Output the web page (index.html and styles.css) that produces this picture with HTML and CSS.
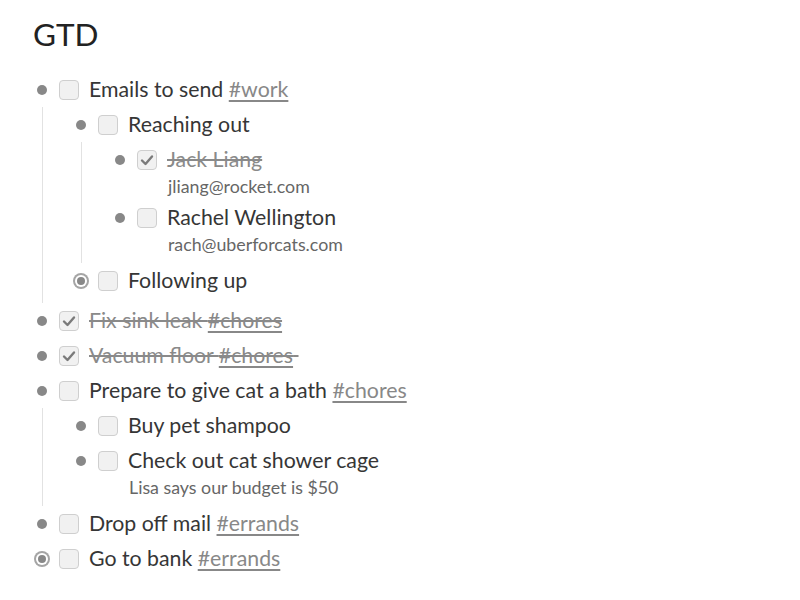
FILE: index.html
```html
<!DOCTYPE html>
<html>
<head>
<meta charset="utf-8">
<link rel="stylesheet" href="styles.css">
</head>
<body>
<div class="page">
  <h1 class="title">GTD</h1>
  <ul class="list">
    <li class="item">
      <div class="row"><span class="bullet"></span><span class="cb"></span><span class="text">Emails to send <span class="tag">#work</span></span></div>
      <ul class="children">
        <li class="item">
          <div class="row"><span class="bullet"></span><span class="cb"></span><span class="text">Reaching out</span></div>
          <ul class="children">
            <li class="item done">
              <div class="row"><span class="bullet"></span><span class="cb checked"><svg viewBox="0 0 20 20" width="20" height="20"><path d="M5 10.5 L8.5 14 L15 6.5" fill="none" stroke="#7a7a7a" stroke-width="2.4" stroke-linecap="round" stroke-linejoin="round"/></svg></span><span class="text">Jack Liang</span></div>
              <div class="note">jliang@rocket.com</div>
            </li>
            <li class="item">
              <div class="row"><span class="bullet"></span><span class="cb"></span><span class="text">Rachel Wellington</span></div>
              <div class="note">rach@uberforcats.com</div>
            </li>
          </ul>
        </li>
        <li class="item">
          <div class="row"><span class="bullet collapsed"></span><span class="cb"></span><span class="text">Following up</span></div>
        </li>
      </ul>
    </li>
    <li class="item done">
      <div class="row"><span class="bullet"></span><span class="cb checked"><svg viewBox="0 0 20 20" width="20" height="20"><path d="M5 10.5 L8.5 14 L15 6.5" fill="none" stroke="#7a7a7a" stroke-width="2.4" stroke-linecap="round" stroke-linejoin="round"/></svg></span><span class="text">Fix sink leak <span class="tag">#chores</span></span></div>
    </li>
    <li class="item done">
      <div class="row"><span class="bullet"></span><span class="cb checked"><svg viewBox="0 0 20 20" width="20" height="20"><path d="M5 10.5 L8.5 14 L15 6.5" fill="none" stroke="#7a7a7a" stroke-width="2.4" stroke-linecap="round" stroke-linejoin="round"/></svg></span><span class="text">Vacuum floor <span class="tag">#chores</span>&nbsp;</span></div>
    </li>
    <li class="item">
      <div class="row"><span class="bullet"></span><span class="cb"></span><span class="text">Prepare to give cat a bath <span class="tag">#chores</span></span></div>
      <ul class="children">
        <li class="item">
          <div class="row"><span class="bullet"></span><span class="cb"></span><span class="text">Buy pet shampoo</span></div>
        </li>
        <li class="item">
          <div class="row"><span class="bullet"></span><span class="cb"></span><span class="text">Check out cat shower cage</span></div>
          <div class="note">Lisa says our budget is $50</div>
        </li>
      </ul>
    </li>
    <li class="item">
      <div class="row"><span class="bullet"></span><span class="cb"></span><span class="text">Drop off mail <span class="tag">#errands</span></span></div>
    </li>
    <li class="item">
      <div class="row"><span class="bullet collapsed"></span><span class="cb"></span><span class="text">Go to bank <span class="tag">#errands</span></span></div>
    </li>
  </ul>
</div>
</body>
</html>
```
FILE: styles.css
```css
* { box-sizing: border-box; }
html, body { margin: 0; padding: 0; background: #fff; }
body {
  font-family: Lato, "Open Sans", sans-serif;
  color: #333;
}
.page {
  padding: 14px 0 0 33px;
}
.title {
  margin: 0 0 18px 0;
  font-size: 31.5px;
  font-weight: 400;
  line-height: 40px;
  color: #222;
}
.list, .children {
  list-style: none;
  margin: 0;
  padding: 0;
}
.children {
  margin-left: 9px;
  padding-left: 29px;
  padding-bottom: 5px;
  border-left: 1px solid #e2e2e2;
}
.row {
  display: flex;
  align-items: center;
  height: 35px;
}
.bullet {
  width: 18px;
  height: 18px;
  flex: none;
  display: flex;
  align-items: center;
  justify-content: center;
}
.bullet::before {
  content: "";
  width: 10px;
  height: 10px;
  border-radius: 50%;
  background: #888;
}
.bullet.collapsed::before {
  width: 8px;
  height: 8px;
  box-shadow: 0 0 0 2px #fff, 0 0 0 4px #a5a5a5;
}
.cb {
  flex: none;
  width: 20px;
  height: 20px;
  margin-left: 8px;
  border: 1px solid #cfcfcf;
  border-radius: 4px;
  background: #f1f1f1;
  display: flex;
  align-items: center;
  justify-content: center;
}
.cb svg { display: block; margin: -1px; }
.text {
  margin-left: 10px;
  font-size: 21.3px;
  line-height: 35px;
  white-space: nowrap;
  color: #363636;
}
.tag {
  color: #888;
  text-decoration: underline;
  text-decoration-thickness: 2px;
  text-underline-offset: 3px;
}
.done > .row .text {
  color: #8a8a8a;
  text-decoration: line-through;
  text-decoration-thickness: 2px;
}
.note {
  margin-left: 57px;
  margin-bottom: 4px;
  font-size: 17.8px;
  line-height: 19px;
  color: #666;
}
```
